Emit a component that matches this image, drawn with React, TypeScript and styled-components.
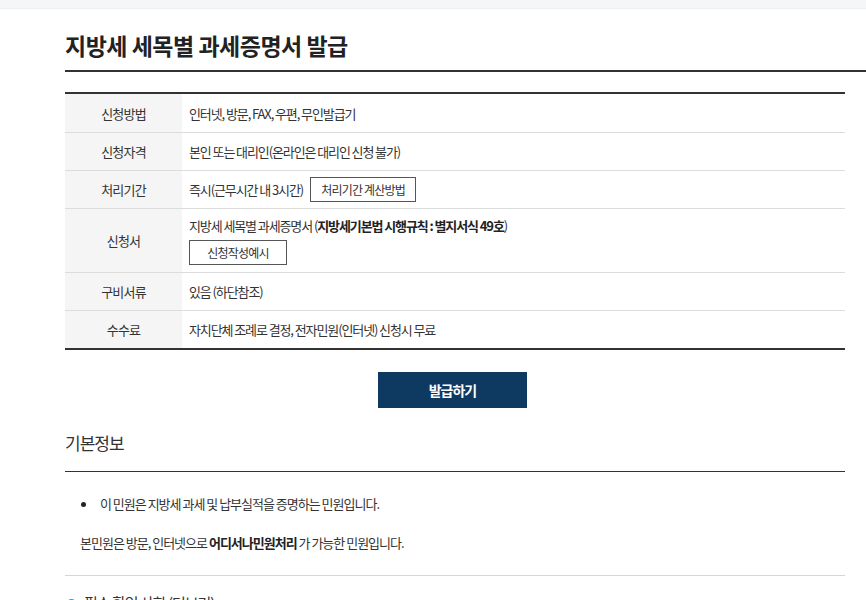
import React from "react";
import styled, { createGlobalStyle } from "styled-components";

const GlobalStyle = createGlobalStyle`
  html, body { margin: 0; padding: 0; background: #fff; }
  body {
    font-family: "Noto Sans CJK KR", "Noto Sans", sans-serif;
    color: #333;
    overflow: hidden;
  }
  * { box-sizing: border-box; }
`;

const TopBand = styled.div`
  height: 9px;
  background: #f5f6f8;
  border-bottom: 1px solid #eceef1;
`;

const Page = styled.div`
  padding-left: 65px;
`;

const TitleBar = styled.div`
  padding-top: 22px;
  padding-bottom: 11px;
  border-bottom: 2px solid #333;
`;

const Title = styled.h1`
  margin: 0;
  font-size: 23px;
  font-weight: 700;
  letter-spacing: -0.5px;
  line-height: 28px;
  color: #222;
`;

const Content = styled.div`
  width: 780px;
`;

const InfoTable = styled.div`
  margin-top: 20px;
  border-top: 2px solid #333;
  border-bottom: 2px solid #333;
`;

const Row = styled.div<{ $tall?: boolean }>`
  display: grid;
  grid-template-columns: 117px 1fr;
  min-height: ${(p) => (p.$tall ? "64px" : "38px")};
  & + & { border-top: 1px solid #dcdcdc; }
`;

const HeadCell = styled.div`
  background: #f5f5f5;
  display: flex;
  align-items: center;
  justify-content: center;
  font-size: 13px;
  letter-spacing: -0.8px;
  color: #333;
`;

const DataCell = styled.div`
  display: flex;
  flex-direction: column;
  justify-content: center;
  gap: 5px;
  padding: 0 7px;
  font-size: 13px;
  letter-spacing: -1.1px;
  color: #333;
`;

const Line = styled.div`
  display: flex;
  align-items: center;
  gap: 7px;
`;

const Strong = styled.b`
  font-weight: 700;
  color: #222;
`;

const OutlineButton = styled.button<{ $width: number }>`
  width: ${(p) => p.$width}px;
  height: 25px;
  border: 1px solid #555;
  background: #fff;
  font-family: inherit;
  font-size: 12px;
  letter-spacing: -0.8px;
  color: #333;
  padding: 0;
  cursor: pointer;
`;

const ActionRow = styled.div`
  display: flex;
  justify-content: center;
  padding-top: 22px;
`;

const PrimaryButton = styled.button`
  width: 149px;
  height: 36px;
  border: none;
  background: #0e3a62;
  color: #fff;
  font-family: inherit;
  font-size: 14px;
  font-weight: 700;
  letter-spacing: -1px;
  cursor: pointer;
  margin-right: 5px;
`;

const SectionTitle = styled.h2`
  margin: 22px 0 0;
  padding-bottom: 16px;
  border-bottom: 1px solid #333;
  font-size: 17px;
  font-weight: 400;
  letter-spacing: -1px;
  line-height: 25px;
  color: #333;
`;

const Bullets = styled.ul`
  margin: 22px 0 0;
  padding: 0 0 0 16px;
  list-style: none;
`;

const BulletItem = styled.li`
  display: flex;
  align-items: center;
  gap: 14px;
  font-size: 13px;
  letter-spacing: -1px;
  line-height: 20px;
  &::before {
    content: "";
    width: 5px;
    height: 5px;
    border-radius: 50%;
    background: #222;
  }
`;

const Para = styled.p`
  margin: 19px 0 0;
  padding: 0 0 22px 15px;
  border-bottom: 1px solid #d6d6d6;
  font-size: 13px;
  letter-spacing: -1px;
  line-height: 20px;
`;

const NextHead = styled.div`
  display: flex;
  align-items: center;
  gap: 8px;
  margin-top: 16px;
  padding-left: 2px;
  font-size: 15px;
  letter-spacing: -1px;
  line-height: 22px;
  color: #333;
  &::before {
    content: "";
    width: 9px;
    height: 9px;
    border-radius: 50%;
    background: #2a9fbf;
  }
`;

export default function App() {
  return (
    <>
      <GlobalStyle />
      <TopBand />
      <Page>
        <TitleBar>
          <Title>지방세 세목별 과세증명서 발급</Title>
        </TitleBar>
        <Content>
          <InfoTable>
            <Row>
              <HeadCell>신청방법</HeadCell>
              <DataCell>인터넷, 방문, FAX, 우편, 무인발급기</DataCell>
            </Row>
            <Row>
              <HeadCell>신청자격</HeadCell>
              <DataCell>본인 또는 대리인(온라인은 대리인 신청 불가)</DataCell>
            </Row>
            <Row>
              <HeadCell>처리기간</HeadCell>
              <DataCell>
                <Line>
                  즉시(근무시간 내 3시간)
                  <OutlineButton $width={106}>처리기간 계산방법</OutlineButton>
                </Line>
              </DataCell>
            </Row>
            <Row $tall>
              <HeadCell>신청서</HeadCell>
              <DataCell>
                <span>
                  지방세 세목별 과세증명서 (<Strong>지방세기본법 시행규칙 : 별지서식 49호</Strong>)
                </span>
                <Line>
                  <OutlineButton $width={98}>신청작성예시</OutlineButton>
                </Line>
              </DataCell>
            </Row>
            <Row>
              <HeadCell>구비서류</HeadCell>
              <DataCell>있음 (하단참조)</DataCell>
            </Row>
            <Row>
              <HeadCell>수수료</HeadCell>
              <DataCell>자치단체 조례로 결정, 전자민원(인터넷) 신청시 무료</DataCell>
            </Row>
          </InfoTable>
          <ActionRow>
            <PrimaryButton>발급하기</PrimaryButton>
          </ActionRow>
          <SectionTitle>기본정보</SectionTitle>
          <Bullets>
            <BulletItem>이 민원은 지방세 과세 및 납부실적을 증명하는 민원입니다.</BulletItem>
          </Bullets>
          <Para>
            본민원은 방문, 인터넷으로 <Strong>어디서나민원처리</Strong> 가 가능한 민원입니다.
          </Para>
          <NextHead>필수 확인 사항 (더보기)</NextHead>
        </Content>
      </Page>
    </>
  );
}
